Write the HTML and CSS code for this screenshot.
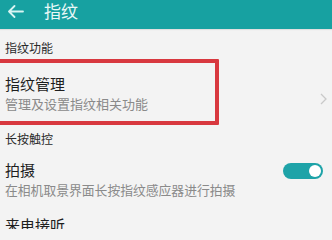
FILE: index.html
```html
<!DOCTYPE html>
<html lang="zh-CN">
<head>
<meta charset="utf-8">
<link rel="stylesheet" href="styles.css">
</head>
<body>
<div class="screen">
  <header class="appbar">
    <svg class="back" width="17" height="13" viewBox="0 0 17 13"><path d="M16 6.5H2M7.5 1L2 6.5L7.5 12" fill="none" stroke="#d8f4f2" stroke-width="1.8" stroke-linecap="round" stroke-linejoin="round"/></svg>
    <span class="title">指纹</span>
  </header>
  <div class="section">指纹功能</div>
  <div class="item item-manage">
    <div class="texts">
      <div class="item-title">指纹管理</div>
      <div class="item-sub">管理及设置指纹相关功能</div>
    </div>
    <svg class="chev" width="7" height="12" viewBox="0 0 7 12"><path d="M1 1L6 6L1 11" fill="none" stroke="#c9c9c9" stroke-width="1.3"/></svg>
    <div class="highlight"></div>
  </div>
  <div class="section section-2">长按触控</div>
  <div class="item item-shoot">
    <div class="texts">
      <div class="item-title">拍摄</div>
      <div class="item-sub">在相机取景界面长按指纹感应器进行拍摄</div>
    </div>
    <div class="toggle"><div class="knob"></div></div>
  </div>
  <div class="item item-call">
    <div class="texts">
      <div class="item-title">来电接听</div>
    </div>
  </div>
</div>
</body>
</html>
```
FILE: styles.css
```css
html, body {
  margin: 0;
  padding: 0;
}
body {
  width: 332px;
  height: 229px;
  overflow: hidden;
  background: #f3f3f3;
  font-family: "Noto Sans CJK SC", "Noto Sans", sans-serif;
}
.screen {
  display: flex;
  flex-direction: column;
}
.appbar {
  height: 29px;
  background: #17a1a1;
  display: flex;
  align-items: center;
  padding: 0 0 7px 7px;
  box-sizing: border-box;
  box-shadow: 0 1px 1px rgba(0,0,0,0.08);
}
.back {
  display: block;
}
.title {
  margin-left: 20px;
  color: #e9f8f7;
  font-size: 17px;
  line-height: 20px;
}
.section {
  height: 31px;
  box-sizing: border-box;
  padding: 12px 0 0 5px;
  font-size: 12px;
  line-height: 14px;
  color: #2a2a2a;
}
.section-2 {
  padding-top: 10px;
}
.item {
  position: relative;
  display: flex;
  align-items: center;
  padding-left: 5px;
}
.texts {
  flex: 1;
}
.item-title {
  font-size: 15px;
  line-height: 18px;
  color: #1e1e1e;
}
.item-sub {
  font-size: 13px;
  line-height: 15px;
  color: #8a8a8a;
  margin-top: 3px;
}
.item-manage {
  height: 62px;
  box-sizing: border-box;
  padding-top: 3px;
}
.chev {
  display: block;
  margin-right: 5px;
  margin-top: 12px;
}
.highlight {
  position: absolute;
  left: -6px;
  top: -1px;
  width: 217px;
  height: 58px;
  border: 4px solid #d8383f;
  border-radius: 1px;
}
.item-shoot {
  height: 57px;
  box-sizing: border-box;
  padding-bottom: 6px;
}
.item-shoot .item-sub {
  font-size: 12.8px;
}
.toggle {
  width: 40px;
  height: 16px;
  border-radius: 8px;
  background: #1ea3a8;
  margin-right: 9px;
  margin-top: -15px;
  display: flex;
  align-items: center;
  justify-content: flex-end;
  padding-right: 2px;
  box-sizing: border-box;
}
.knob {
  width: 12px;
  height: 12px;
  border-radius: 50%;
  background: #ffffff;
}
.item-call {
  padding-top: 6px;
}
```
